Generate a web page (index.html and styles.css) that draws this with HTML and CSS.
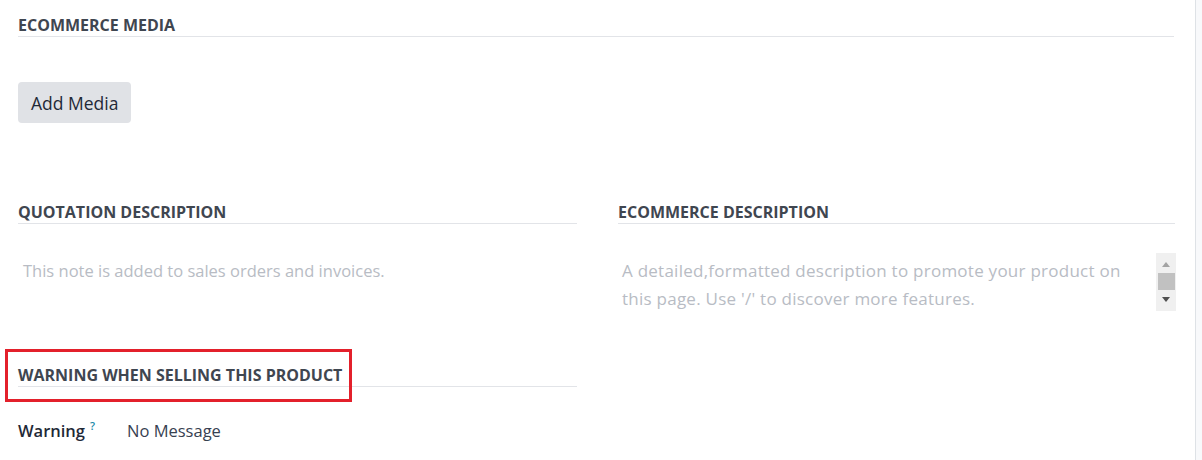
FILE: index.html
```html
<!DOCTYPE html>
<html>
<head>
<meta charset="utf-8">
<link rel="stylesheet" href="styles.css">
</head>
<body>
<div class="page">
  <div class="main">
    <div class="sep first"><span>Ecommerce Media</span></div>
    <div class="media-row">
      <button class="btn-media">Add Media</button>
    </div>
    <div class="cols">
      <div class="col">
        <div class="sep"><span>Quotation Description</span></div>
        <div class="note">This note is added to sales orders and invoices.</div>
        <div class="warn-wrap">
          <div class="sep"><span>Warning when Selling this Product</span></div>
          <div class="highlight"></div>
        </div>
        <div class="field">
          <span class="label">Warning<sup class="help">?</sup></span>
          <span class="value">No Message</span>
        </div>
      </div>
      <div class="col">
        <div class="sep"><span>Ecommerce Description</span></div>
        <div class="ecom">
          <div class="ecom-text">A detailed,formatted description to promote your product on this page. Use '/' to discover more features.</div>
          <div class="scrollbar">
            <svg class="arr up" width="8" height="5" viewBox="0 0 8 5"><path d="M4 0L8 5H0Z" fill="#a3a3a3"/></svg>
            <div class="thumb"></div>
            <svg class="arr down" width="8" height="5" viewBox="0 0 8 5"><path d="M0 0H8L4 5Z" fill="#505050"/></svg>
          </div>
        </div>
      </div>
    </div>
  </div>
  <div class="side"></div>
</div>
</body>
</html>
```
FILE: styles.css
```css
html, body {
  margin: 0;
  padding: 0;
  background: #ffffff;
}
body {
  font-family: "Open Sans", "Noto Sans", sans-serif;
  color: #374151;
}
.page {
  display: flex;
  height: 460px;
  overflow: hidden;
}
.main {
  width: 1196px;
  box-sizing: border-box;
  border-right: 1px solid #dee2e6;
  padding: 0 21px 0 18px;
}
.side {
  flex: 1;
  background: #f8f9fb;
}
.sep {
  border-bottom: 1px solid #e2e4e8;
  font-size: 16px;
  font-weight: 700;
  text-transform: uppercase;
  color: #3f4650;
  line-height: 22px;
  padding-bottom: 0;
}
.sep.first {
  margin-top: 14px;
}
.media-row {
  padding-top: 45px;
  height: 41px;
}
.btn-media {
  display: block;
  height: 41px;
  padding: 0 13px;
  border: none;
  border-radius: 4px;
  background: #e0e2e6;
  color: #1f2937;
  font-family: inherit;
  font-size: 17.5px;
  font-weight: 500;
  cursor: pointer;
}
.cols {
  display: grid;
  grid-template-columns: 559px 557px;
  column-gap: 41px;
  margin-top: 78px;
}
.note {
  color: #b8bcc4;
  font-size: 16.5px;
  padding: 33px 0 0 5px;
  line-height: 28px;
  height: 60px;
}
.warn-wrap {
  position: relative;
  margin-top: 47px;
}
.highlight {
  position: absolute;
  left: -13px;
  top: -15px;
  width: 347px;
  height: 53px;
  box-sizing: border-box;
  border: 3px solid #e3202b;
  pointer-events: none;
}
.field {
  display: flex;
  align-items: baseline;
  margin-top: 32px;
  font-size: 16.5px;
}
.label {
  width: 109px;
  font-weight: 600;
  color: #1f2937;
}
.help {
  color: #1a8aa8;
  font-size: 11px;
  margin-left: 5px;
  font-weight: 600;
  vertical-align: 7px;
  line-height: 0;
}
.value {
  color: #374151;
}
.ecom {
  display: flex;
  justify-content: space-between;
  margin-top: 29px;
}
.ecom-text {
  color: #b8bcc4;
  font-size: 17px;
  letter-spacing: 0.25px;
  line-height: 28px;
  padding: 4px 0 0 4px;
  width: 510px;
}
.scrollbar {
  width: 20px;
  height: 58px;
  margin-right: -1px;
  background: #f0f0f0;
  display: flex;
  flex-direction: column;
  align-items: center;
  box-sizing: border-box;
  padding-top: 9px;
}
.thumb {
  width: 17px;
  height: 17px;
  margin-top: 6px;
  background: #c1c1c1;
}
.arr {
  display: block;
}
.arr.down {
  margin-top: 7px;
}
```
